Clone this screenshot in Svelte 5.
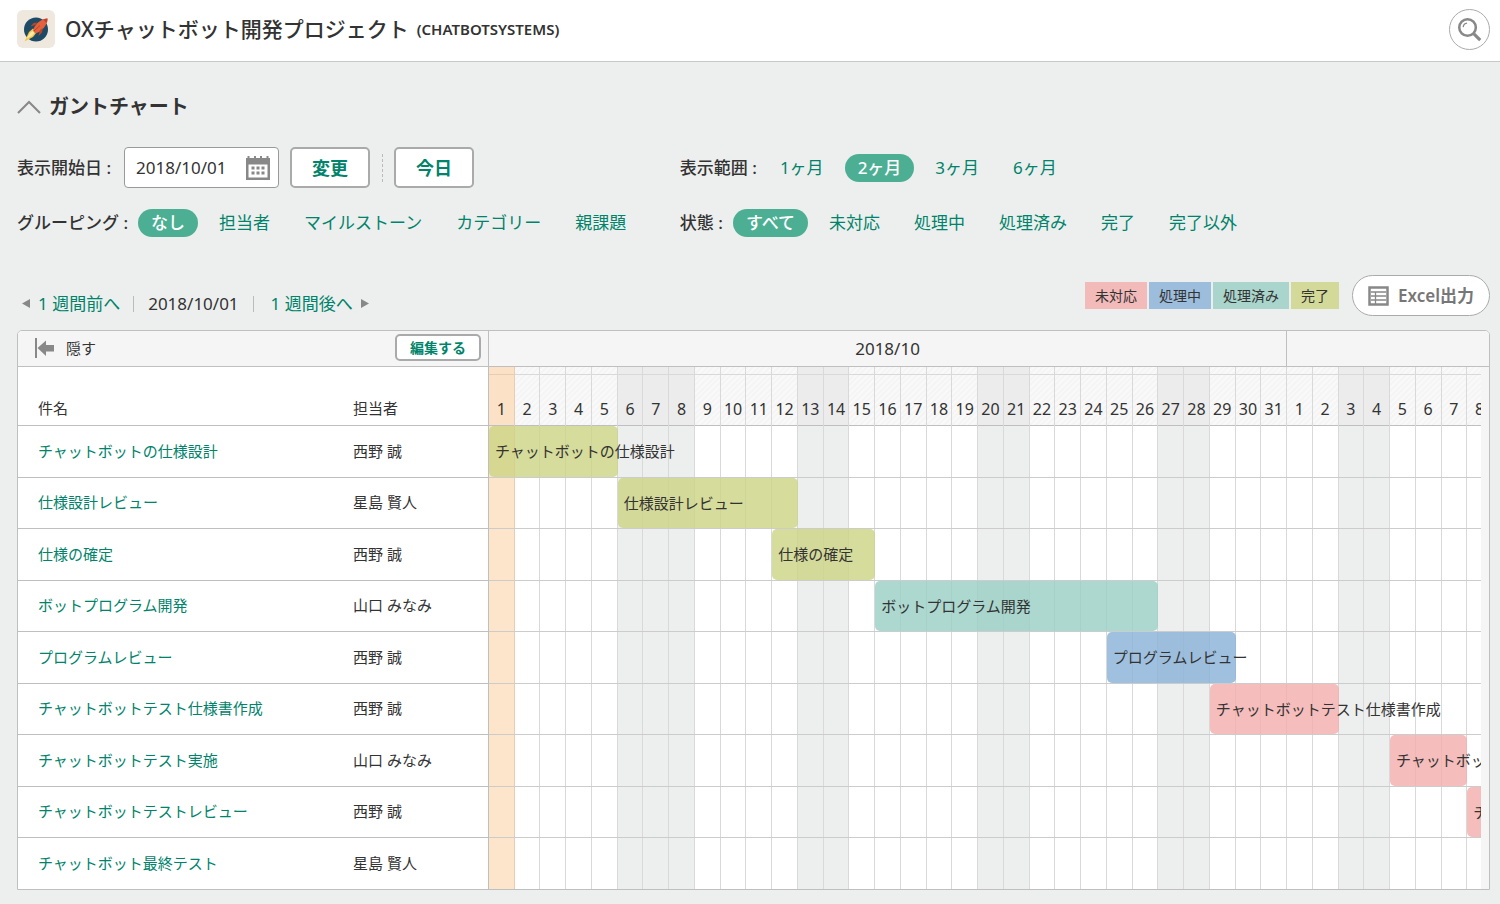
<script lang="ts">
  type Status = "open" | "progress" | "resolved" | "closed";

  interface Issue {
    title: string;
    assignee: string;
    start?: number;
    days?: number;
    status?: Status;
  }

  const ranges = ["1ヶ月", "2ヶ月", "3ヶ月", "6ヶ月"];
  const groupings = ["なし", "担当者", "マイルストーン", "カテゴリー", "親課題"];
  const statuses = ["すべて", "未対応", "処理中", "処理済み", "完了", "完了以外"];

  const legend: { label: string; status: Status }[] = [
    { label: "未対応", status: "open" },
    { label: "処理中", status: "progress" },
    { label: "処理済み", status: "resolved" },
    { label: "完了", status: "closed" },
  ];

  // start is the day offset from the first day shown, counted from 1
  const issues: Issue[] = [
    { title: "チャットボットの仕様設計", assignee: "西野 誠", start: 1, days: 5, status: "closed" },
    { title: "仕様設計レビュー", assignee: "星島 賢人", start: 6, days: 7, status: "closed" },
    { title: "仕様の確定", assignee: "西野 誠", start: 12, days: 4, status: "closed" },
    { title: "ボットプログラム開発", assignee: "山口 みなみ", start: 16, days: 11, status: "resolved" },
    { title: "プログラムレビュー", assignee: "西野 誠", start: 25, days: 5, status: "progress" },
    { title: "チャットボットテスト仕様書作成", assignee: "西野 誠", start: 29, days: 5, status: "open" },
    { title: "チャットボットテスト実施", assignee: "山口 みなみ", start: 36, days: 3, status: "open" },
    { title: "チャットボットテストレビュー", assignee: "西野 誠", start: 39, days: 1, status: "open" },
    { title: "チャットボット最終テスト", assignee: "星島 賢人" },
  ];

  const holidays = [8];
  const days = Array.from({ length: 39 }, (_, i) => ({
    index: i + 1,
    date: i < 31 ? i + 1 : i - 30,
    off: i % 7 === 5 || i % 7 === 6 || holidays.includes(i + 1),
  }));

  let startDate = $state("2018/10/01");
  let range = $state("2ヶ月");
  let grouping = $state("なし");
  let status = $state("すべて");
  let open = $state(true);
</script>

{#snippet choices(items: string[], current: string, pick: (item: string) => void)}
  <div class="choices">
    {#each items as item}
      <button class="choice" class:active={item === current} onclick={() => pick(item)}>{item}</button>
    {/each}
  </div>
{/snippet}

<header class="project">
  <svg class="logo" viewBox="0 0 38 38" aria-hidden="true">
    <rect width="38" height="38" rx="6" fill="#eee8df" />
    <circle cx="19" cy="19.500" r="12" fill="#1d4b66" />
    <path d="M7.500 31.500 12 22l4-3.500 4 3.500-4 5z" fill="#f5c84b" />
    <path d="m9.500 28.500 4-6 3-2 1.500 1.500-3 4z" fill="#f8eba8" />
    <path d="M16 21c1-5.500 6-11.500 14.500-12.500C30.500 15 25 21.500 18.500 23.500z" fill="#e4613c" />
    <path d="m18.500 15-5 1.500 3-3.500 4-.5zM23 20l-1.500 6 3.500-3.500.8-4.500z" fill="#b94727" />
    <path d="M26 9.500c1.500-.6 3-1 4.500-1 0 1.500-.2 3-.8 4.500z" fill="#c5402b" />
    <path d="m17 21 6-5.500" stroke="#b94727" stroke-width="1" />
  </svg>
  <h1>OXチャットボット開発プロジェクト</h1>
  <span class="key">(CHATBOTSYSTEMS)</span>
  <button class="search" aria-label="検索">
    <svg viewBox="0 0 40 40" fill="none" stroke="#888">
      <circle cx="18" cy="18" r="8.500" stroke-width="2.600" />
      <path d="M13.500 17.500c.3-2.300 1.700-3.700 4-4" stroke-width="1.300" />
      <path d="m24.500 24.500 6.500 6.500" stroke-width="3.200" />
    </svg>
  </button>
</header>

<main>
  <h2>
    <button class="toggle" aria-expanded={open} onclick={() => (open = !open)}>
      <svg viewBox="0 0 24 14" width="24" height="14" aria-hidden="true">
        <path d="M1 13 12 2l11 11" fill="none" stroke="#888" stroke-width="2" />
      </svg>
      ガントチャート
    </button>
  </h2>

  {#if open}
    <div class="filters">
      <div class="filter">
        <label class="name" for="start-date">表示開始日 :</label>
        <div class="date-field">
          <input id="start-date" type="text" bind:value={startDate} />
          <button aria-label="カレンダー">
            <svg viewBox="0 0 24 24" width="24" height="24" fill="#888">
              <path fill-rule="evenodd" d="M0 2h24v22H0zM2.500 8.500v13h19v-13z" />
              <path d="M1.500 0h2v4h-2zM8 0h2v4H8zM14 0h2v4h-2zM20.500 0h2v4h-2z" />
              <path d="M5.500 10.500h3v3h-3zM10.500 10.500h3v3h-3zM15.500 10.500h3v3h-3zM5.500 15.500h3v3h-3zM10.500 15.500h3v3h-3zM15.500 15.500h3v3h-3z" />
            </svg>
          </button>
        </div>
        <button class="boxed">変更</button>
        <span class="divider"></span>
        <button class="boxed">今日</button>
      </div>
      <div class="filter">
        <span class="name">表示範囲 :</span>
        {@render choices(ranges, range, (item) => (range = item))}
      </div>
      <div class="filter">
        <span class="name">グルーピング :</span>
        {@render choices(groupings, grouping, (item) => (grouping = item))}
      </div>
      <div class="filter">
        <span class="name">状態 :</span>
        {@render choices(statuses, status, (item) => (status = item))}
      </div>
    </div>
  {/if}

  <div class="toolbar">
    <nav class="pager">
      <a href="#prev">
        <svg viewBox="0 0 8 9" width="8" height="9"><path d="M8 0v9L0 4.500z" fill="#888" /></svg>
        1 週間前へ
      </a>
      <span class="current">{startDate}</span>
      <a href="#next">
        1 週間後へ
        <svg viewBox="0 0 8 9" width="8" height="9"><path d="M0 0v9l8-4.500z" fill="#888" /></svg>
      </a>
    </nav>
    <ul class="legend">
      {#each legend as entry}
        <li class={entry.status}>{entry.label}</li>
      {/each}
    </ul>
    <button class="export">
      <svg viewBox="0 0 21 20" width="21" height="20" fill="none" stroke="#888" aria-hidden="true">
        <path d="M1.500 1.500h18v17h-18z" stroke-width="2.500" />
        <path d="M3 6h15M3 10h15M3 14h15M7.500 6v12" stroke-width="1.300" />
      </svg>
      Excel出力
    </button>
  </div>

  <div class="gantt">
    <section class="list">
      <div class="list-head">
        <button class="hide">
          <svg viewBox="0 0 20 20" width="20" height="20" fill="#888" aria-hidden="true">
            <path d="M0 0h2v20H0z" />
            <path d="M2.500 10 11 2.500V7h8v6.500h-8V18z" />
          </svg>
          隠す
        </button>
        <button class="edit">編集する</button>
      </div>
      <table>
        <thead>
          <tr>
            <th class="subject">件名</th>
            <th>担当者</th>
          </tr>
        </thead>
        <tbody>
          {#each issues as issue}
            <tr>
              <td class="subject"><a href="#issue">{issue.title}</a></td>
              <td>{issue.assignee}</td>
            </tr>
          {/each}
        </tbody>
      </table>
    </section>

    <section class="chart">
      <div class="months">
        <div class="month first">2018/10</div>
        <div class="month"></div>
      </div>
      <div class="viewport">
        <div class="track">
          {#each days as day}
            <div
              class="day"
              class:off={day.off}
              class:today={day.index === 1}
              style="grid-column: {day.index}"
            >
              <span>{day.date}</span>
            </div>
          {/each}
          {#each issues as issue, i}
            <div class="line" style="grid-row: {i + 2}"></div>
            {#if issue.status}
              <div
                class="bar {issue.status}"
                style="grid-row: {i + 2}; grid-column: {issue.start} / span {issue.days}"
              >
                {issue.title}
              </div>
            {/if}
          {/each}
        </div>
      </div>
    </section>
  </div>
</main>

<style>
  :global(body) {
    background-color: #edefee;
    color: #333;
    font-family: "Noto Sans", "Noto Sans CJK JP", sans-serif;
    font-size: 15px;
    line-height: 20px;
  }

  :global(#app) {
    --green: #00836b;
    --border: #bfbfbf;
    --open: rgb(242 172 171 / 0.8);
    --progress: rgb(136 176 216 / 0.8);
    --resolved: rgb(151 206 195 / 0.8);
    --closed: rgb(204 211 130 / 0.8);
  }

  * {
    box-sizing: border-box;
  }

  button,
  input {
    font: inherit;
    color: inherit;
    margin: 0;
    padding: 0;
    border: none;
    background: none;
  }

  button {
    cursor: pointer;
    white-space: nowrap;
  }

  svg {
    display: block;
    flex: none;
  }

  a {
    color: var(--green);
    text-decoration: none;
  }

  .project {
    display: flex;
    align-items: center;
    height: 62px;
    padding: 0 10px 3px 17px;
    background-color: #fff;
    border-bottom: 1px solid #c8c8c8;

    .logo {
      width: 38px;
      height: 38px;
      margin-right: 10px;
    }

    h1 {
      margin: 0;
      font-size: 21px;
      font-weight: 500;
      line-height: 28px;
    }

    .key {
      margin-left: 8px;
      font-weight: 600;
    }
  }

  .search {
    width: 41px;
    height: 41px;
    margin-left: auto;
    border: 1px solid #aaa;
    border-radius: 50%;
  }

  main {
    padding: 31px 10px 14px 17px;
  }

  h2 {
    margin: 0;
    font-size: 20px;
    line-height: 28px;
  }

  .toggle {
    display: flex;
    align-items: center;
    gap: 8px;
    font-weight: 700;
  }

  .filters {
    display: grid;
    grid-template-columns: 9fr 11fr;
    align-items: center;
    row-gap: 21px;
    margin-top: 26px;
    font-size: 17px;
    line-height: 28px;
  }

  .filter {
    display: flex;
    align-items: center;
  }

  .name {
    margin-right: 10px;
    font-weight: 500;
    white-space: nowrap;
  }

  .date-field {
    display: flex;
    align-items: center;
    width: 155px;
    height: 41px;
    margin-left: 3px;
    padding: 0 8px 0 11px;
    background-color: #fff;
    border: 1px solid #999;
    border-radius: 4px;

    input {
      flex: 1;
      min-width: 0;
      outline: none;
    }
  }

  .boxed {
    width: 80px;
    height: 41px;
    margin-left: 11px;
    background-color: #fff;
    border: 2px solid #aaa;
    border-radius: 5px;
    color: var(--green);
    font-size: 18px;
    font-weight: 700;
  }

  .divider {
    height: 28px;
    margin-left: 12px;
    border-left: 1px dashed #bbb;
  }

  .choices {
    display: flex;
    gap: 8px;
  }

  .choice {
    height: 28px;
    padding: 0 13px;
    border-radius: 14px;
    color: var(--green);

    &.active {
      background-color: #4caf93;
      color: #fff;
      font-weight: 500;
    }
  }

  .toolbar {
    display: flex;
    align-items: center;
    margin: 38px 0 14px;
  }

  .pager {
    display: flex;
    align-items: center;
    margin: 16px auto 0 5px;
    font-size: 17px;
    line-height: 24px;

    a {
      display: flex;
      align-items: center;
      gap: 8px;
    }

    .current {
      margin: 0 17px 0 13px;
      padding: 0 14px;
      line-height: 16px;
      border-left: 1px solid #bbb;
      border-right: 1px solid #bbb;
    }
  }

  .legend {
    display: flex;
    gap: 2px;
    margin: 0 13px 0 0;
    padding: 0;
    list-style: none;
    font-size: 14px;
    line-height: 27px;

    li {
      padding: 0 10px;
    }
  }

  .open {
    background-color: var(--open);
  }

  .progress {
    background-color: var(--progress);
  }

  .resolved {
    background-color: var(--resolved);
  }

  .closed {
    background-color: var(--closed);
  }

  .export {
    display: flex;
    align-items: center;
    gap: 9px;
    height: 41px;
    padding: 0 15px;
    background-color: #fff;
    border: 1px solid #aaa;
    border-radius: 21px;
    color: #777;
    font-size: 17px;
    font-weight: 600;
  }

  .gantt {
    display: flex;
    background-color: #fff;
    border: 1px solid var(--border);
    border-radius: 5px 5px 0 0;
    overflow: hidden;
  }

  .list {
    flex: none;
    width: 471px;
    border-right: 1px solid var(--border);
  }

  .list-head {
    display: flex;
    align-items: center;
    justify-content: space-between;
    height: 36px;
    padding: 0 7px 2px 17px;
    background-color: #f5f5f5;
    border-bottom: 1px solid var(--border);
  }

  .hide {
    display: flex;
    align-items: center;
    gap: 11px;
  }

  .edit {
    height: 27px;
    padding: 0 13px;
    background-color: #fff;
    border: 2px solid #aaa;
    border-radius: 5px;
    color: var(--green);
    font-size: 14px;
    font-weight: 700;
  }

  table {
    width: 100%;
    border-spacing: 0;
    table-layout: fixed;

    th,
    td {
      height: 52px;
      padding: 0 0 2px;
      border-bottom: 1px solid var(--border);
      text-align: left;
      font-weight: 400;
    }

    th {
      height: 59px;
      padding-top: 26px;
    }

    .subject {
      width: 335px;
      padding-left: 20px;
    }

    tr:nth-child(even) td,
    tr:last-child td {
      height: 51px;
    }

    tbody tr:last-child td {
      border-bottom: none;
    }
  }

  .chart {
    flex: 1;
    min-width: 0;
    overflow: hidden;
    background-color: #f5f5f5;
  }

  .months,
  .track {
    display: grid;
    grid-template-columns: repeat(39, 1fr);
  }

  .months {
    height: 36px;
    margin-right: -4px;
    border-bottom: 1px solid var(--border);
    font-size: 17px;
    line-height: 35px;
    text-align: center;
  }

  .month {
    grid-column: span 8;

    &.first {
      grid-column: span 31;
      border-right: 1px solid var(--border);
    }
  }

  .viewport {
    margin-right: 8px;
    overflow: hidden;
    background-color: #fff;
  }

  /* the last day runs on under the right edge */
  .track {
    grid-template-rows: 59px repeat(4, 52px 51px) 51px;
    margin-right: -12px;
  }

  .day {
    grid-row: 1 / -1;
    min-width: 0;
    border-right: 1px solid #d9d9d9;
    font-size: 16px;
    text-align: center;

    span {
      display: block;
      height: 59px;
      padding-top: 32px;
      background: linear-gradient(#d9d9d9, #d9d9d9) 0 7px / 100% 1px no-repeat,
        repeating-linear-gradient(135deg, #f5f5f5 0 2px, #f9f9f9 2px 4px);
      border-bottom: 1px solid var(--border);
    }

    &.off {
      background-color: #edefee;

      span {
        background: linear-gradient(#d9d9d9, #d9d9d9) 0 7px / 100% 1px no-repeat #ececec;
      }
    }

    &.today {
      background-color: #fde5cb;
      border-color: #e6cdb4;

      span {
        background: linear-gradient(#e6cdb4, #e6cdb4) 0 7px / 100% 1px no-repeat #fbe2c7;
      }
    }
  }

  .line {
    grid-column: 1 / -1;
    border-bottom: 1px solid #ccc;

    &:last-child {
      border-bottom: none;
    }
  }

  .bar {
    z-index: 1;
    min-width: 0;
    margin-bottom: 1px;
    padding-left: 6px;
    border-radius: 5px;
    line-height: 50px;
    white-space: nowrap;
  }
</style>
